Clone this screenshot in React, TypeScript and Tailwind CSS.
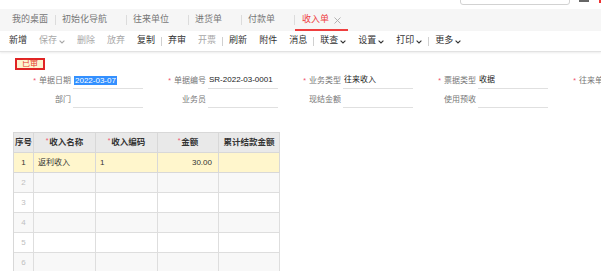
import React from "react";

const Chevron = () => (
  <svg width="6" height="4" viewBox="0 0 6 4" className="ml-[2px] mt-[1px]">
    <path d="M0.6 0.6 L3 3 L5.4 0.6" fill="none" stroke="currentColor" strokeWidth="1.1" />
  </svg>
);

const tabs = ["初始化导航", "往来单位", "进货单", "付款单"];

type Tool = { t: string; d?: boolean; c?: boolean; sep?: boolean };
const tools: Tool[] = [
  { t: "新增" },
  { t: "保存", d: true, c: true },
  { t: "删除", d: true },
  { t: "放弃", d: true },
  { t: "复制" },
  { t: "|", sep: true },
  { t: "弃审" },
  { t: "开票", d: true },
  { t: "|", sep: true },
  { t: "刷新" },
  { t: "附件" },
  { t: "消息" },
  { t: "|", sep: true },
  { t: "联查", c: true },
  { t: "设置", c: true },
  { t: "打印", c: true },
  { t: "|", sep: true },
  { t: "更多", c: true },
];

type Field = { label: string; req?: boolean; value?: string; sel?: boolean; noInput?: boolean };
const row1: Field[] = [
  { label: "单据日期", req: true, value: "2022-03-07", sel: true },
  { label: "单据编号", req: true, value: "SR-2022-03-0001" },
  { label: "业务类型", req: true, value: "往来收入" },
  { label: "票据类型", req: true, value: "收据" },
  { label: "往来单位", req: true },
];
const row2: Field[] = [
  { label: "部门" },
  { label: "业务员" },
  { label: "现结金额" },
  { label: "使用预收" },
  { label: "", noInput: true },
];

function FieldRow({ fields }: { fields: Field[] }) {
  return (
    <div className="flex h-[17px] ml-[9px]">
      {fields.map((f, i) => (
        <div key={i} className="flex w-[135px] shrink-0 h-full">
          <div className="w-[64px] shrink-0 flex items-center justify-end pr-[2px] text-[8px] text-[#777] whitespace-nowrap">
            {f.req && <span className="text-[#f0506e] mr-[3px] text-[7px] leading-none -mt-[1px]">*</span>}
            {f.label}
          </div>
          {!f.noInput && (
            <div className="w-[70px] shrink-0 border-b border-[#e0e0e0] flex items-center pl-px text-[8px] text-[#222] whitespace-nowrap">
              {f.value &&
                (f.sel ? (
                  <span className="bg-[#3390ff] text-white px-px leading-[9px]">{f.value}</span>
                ) : (
                  <span>{f.value}</span>
                ))}
            </div>
          )}
        </div>
      ))}
    </div>
  );
}

const cols = "grid grid-cols-[20px_62px_62px_61px_61px]";

export default function App() {
  return (
    <div className="w-[601px] h-[271px] overflow-hidden bg-white text-[#333] font-['Liberation_Sans','Noto_Sans_CJK_SC',sans-serif]">
      {/* top strip */}
      <div className="h-[9px] flex items-start overflow-hidden">
        <div className="ml-[460px] -mt-[10px] w-[110px] h-[15px] border border-[#d2d2d2] rounded-[3px] shrink-0" />
        <div className="ml-[9px] w-[10px] h-[2px] bg-[#666] shrink-0" />
        <div className="ml-[10px] w-[3px] h-[3px] bg-[#e33] shrink-0" />
      </div>

      {/* tab bar */}
      <div className="h-[22px] bg-[#f6f6f6] flex items-stretch text-[9px] text-[#777]">
        <div className="pl-[12px] pr-[7px] flex items-center">我的桌面</div>
        {tabs.map((t) => (
          <React.Fragment key={t}>
            <div className="w-px h-[10px] bg-[#dcdcdc] self-center" />
            <div className="pl-[6px] pr-[19px] flex items-center">{t}</div>
          </React.Fragment>
        ))}
        <div className="w-px h-[10px] bg-[#dcdcdc] self-center" />
        <div className="pl-[7px] pr-[7px] flex items-center border-b-2 border-[#ee3f3f] text-[#ee3f3f] pt-[2px]">
          <span>收入单</span>
          <svg width="7" height="7" viewBox="0 0 7 7" className="ml-[5px]">
            <path d="M0.5 0.5 L6.5 6.5 M6.5 0.5 L0.5 6.5" stroke="#aaa" strokeWidth="0.9" />
          </svg>
        </div>
      </div>

      {/* toolbar */}
      <div className="h-[21px] flex items-center pl-[3px] text-[9px] border-b border-[#e2e2e2] shadow-[0_1px_2px_rgba(0,0,0,0.08)]">
        {tools.map((t, i) =>
          t.sep ? (
            <div key={i} className="w-px h-[9px] bg-[#d0d0d0]" />
          ) : (
            <div
              key={i}
              className={`px-[6px] flex items-center whitespace-nowrap ${t.d ? "text-[#a8a8a8]" : "text-[#333]"}`}
            >
              {t.t}
              {t.c && <Chevron />}
            </div>
          )
        )}
      </div>

      {/* badge */}
      <div className="ml-[15px] mt-[6px] flex">
        <div className="h-[12px] px-[5px] border-2 border-[#e02424] bg-[#fdf3cf] text-[#e53a2e] text-[8px] leading-none flex items-center">
          已审
        </div>
      </div>

      {/* form */}
      <div className="mt-[2px] flex flex-col gap-[2px]">
        <FieldRow fields={row1} />
        <FieldRow fields={row2} />
      </div>

      {/* table */}
      <div className="ml-[13px] mt-[24px] w-[267px] border-l border-t border-[#d8d8d8]">
        <div className={`${cols} h-[20px] bg-[#e9e9e9] text-[8.5px] font-bold text-[#333]`}>
          {[
            { t: "序号" },
            { t: "收入名称", r: true },
            { t: "收入编码", r: true },
            { t: "金额", r: true },
            { t: "累计结款金额" },
          ].map((h, i) => (
            <div key={i} className="border-r border-b border-[#d8d8d8] flex items-center justify-center whitespace-nowrap">
              {h.r && <span className="text-[#f0506e] text-[7px] font-normal mr-px -mt-[3px]">*</span>}
              {h.t}
            </div>
          ))}
        </div>
        <div className={`${cols} h-[20px] bg-[#fff6cc] text-[8px] text-[#333]`}>
          <div className="border-r border-b border-[#d8d8d8] flex items-center justify-center">1</div>
          <div className="border-r border-b border-[#d8d8d8] flex items-center pl-[4px]">返利收入</div>
          <div className="border-r border-b border-[#d8d8d8] flex items-center pl-[4px]">1</div>
          <div className="border-r border-b border-[#d8d8d8] flex items-center justify-end pr-[6px]">30.00</div>
          <div className="border-r border-b border-[#d8d8d8]" />
        </div>
        {[2, 3, 4, 5, 6].map((n) => (
          <div key={n} className={`${cols} h-[20px] text-[8px] ${n % 2 === 0 ? "bg-[#f8f8f8]" : "bg-white"}`}>
            <div className="border-r border-b border-[#dedede] flex items-center justify-center text-[#c0c0c0]">{n}</div>
            <div className="border-r border-b border-[#dedede]" />
            <div className="border-r border-b border-[#dedede]" />
            <div className="border-r border-b border-[#dedede]" />
            <div className="border-r border-b border-[#dedede]" />
          </div>
        ))}
      </div>
    </div>
  );
}
